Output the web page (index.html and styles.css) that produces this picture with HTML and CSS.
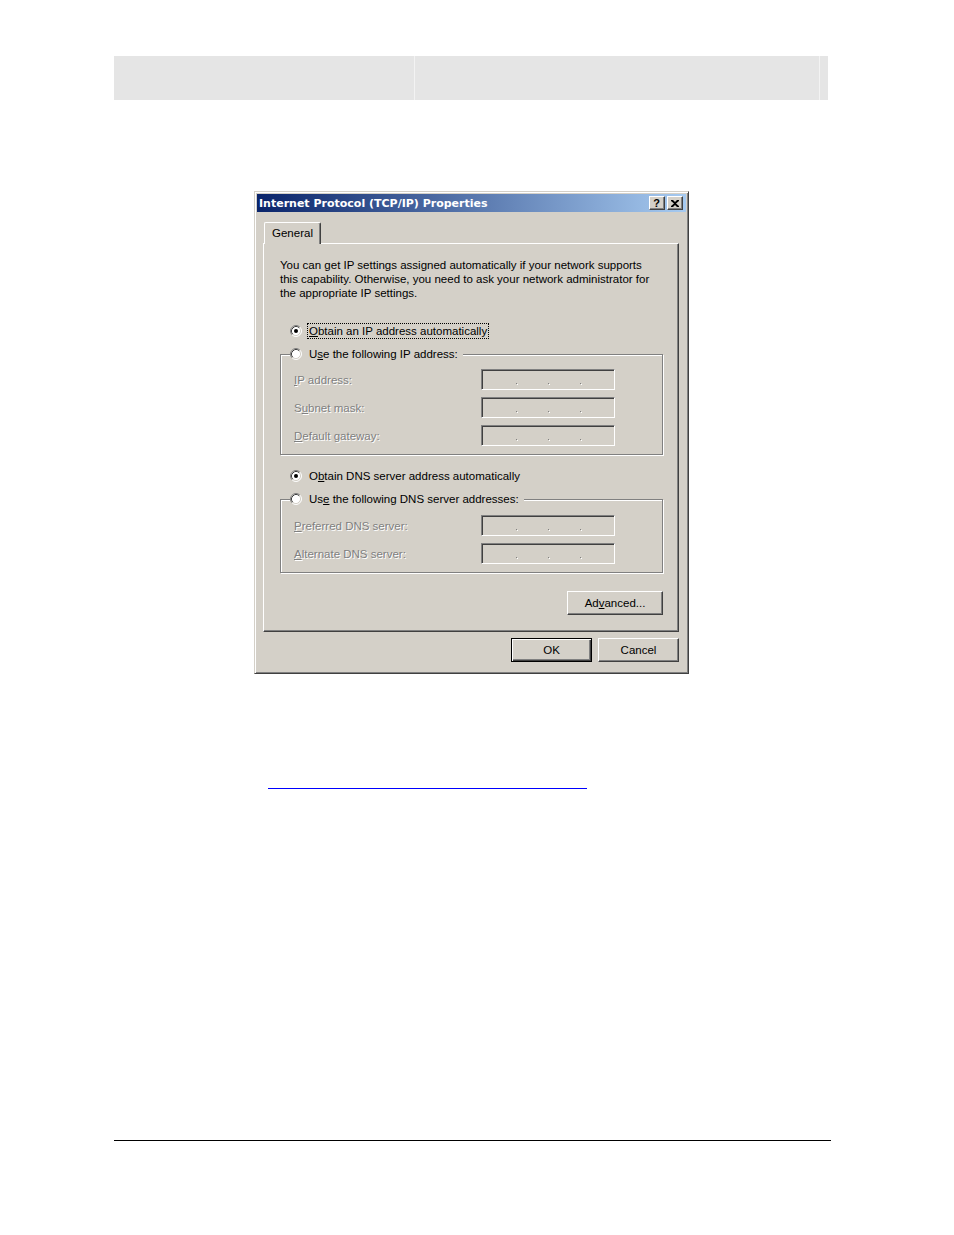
FILE: index.html
```html
<!DOCTYPE html>
<html lang="en">
<head>
<meta charset="utf-8">
<title>Internet Protocol (TCP/IP) Properties</title>
<link rel="stylesheet" href="styles.css">
</head>
<body>
<div class="page">
  <div class="header">
    <div class="hcell hcell-a"></div>
    <div class="hcell hcell-b"></div>
    <div class="hcell hcell-c"></div>
  </div>

  <div class="dialog">
    <div class="titlebar">
      <span class="title">Internet Protocol (TCP/IP) Properties</span>
      <span class="tbtns">
        <span class="tbtn tbtn-help">?</span>
        <span class="tbtn tbtn-close"><svg width="8" height="7" viewBox="0 0 8 7"><path d="M0 0h2l2 2 2-2h2v1L5 3.5 8 6v1H6L4 5 2 7H0V6l3-2.5L0 1z" fill="#000"/></svg></span>
      </span>
    </div>

    <div class="tabs">
      <div class="tab">General</div>
    </div>

    <div class="panel">
      <p class="desc">You can get IP settings assigned automatically if your network supports<br>this capability. Otherwise, you need to ask your network administrator for<br>the appropriate IP settings.</p>

      <div class="radio-row row-first">
        <svg class="radio" width="12" height="12" viewBox="0 0 12 12"><circle cx="6" cy="6" r="5" fill="#fff"/><path d="M2.11 9.89A5.5 5.5 0 0 1 9.89 2.11" fill="none" stroke="#808080"/><path d="M9.89 2.11A5.5 5.5 0 0 1 2.11 9.89" fill="none" stroke="#fff"/><path d="M2.82 9.18A4.5 4.5 0 0 1 9.18 2.82" fill="none" stroke="#404040"/><path d="M9.18 2.82A4.5 4.5 0 0 1 2.82 9.18" fill="none" stroke="#d4d0c8"/><circle cx="6" cy="6" r="2" fill="#000"/></svg>
        <span class="rlabel focus"><u>O</u>btain an IP address automatically</span>
      </div>

      <div class="group group-ip">
        <div class="legend">
          <svg class="radio" width="12" height="12" viewBox="0 0 12 12"><circle cx="6" cy="6" r="5" fill="#fff"/><path d="M2.11 9.89A5.5 5.5 0 0 1 9.89 2.11" fill="none" stroke="#808080"/><path d="M9.89 2.11A5.5 5.5 0 0 1 2.11 9.89" fill="none" stroke="#fff"/><path d="M2.82 9.18A4.5 4.5 0 0 1 9.18 2.82" fill="none" stroke="#404040"/><path d="M9.18 2.82A4.5 4.5 0 0 1 2.82 9.18" fill="none" stroke="#d4d0c8"/></svg>
          <span class="rlabel">U<u>s</u>e the following IP address:</span>
        </div>
        <div class="frow"><span class="flabel"><u>I</u>P address:</span><span class="ipfield"><i class="dot"></i><i class="dot"></i><i class="dot"></i></span></div>
        <div class="frow"><span class="flabel">S<u>u</u>bnet mask:</span><span class="ipfield"><i class="dot"></i><i class="dot"></i><i class="dot"></i></span></div>
        <div class="frow"><span class="flabel"><u>D</u>efault gateway:</span><span class="ipfield"><i class="dot"></i><i class="dot"></i><i class="dot"></i></span></div>
      </div>

      <div class="radio-row row-dns">
        <svg class="radio" width="12" height="12" viewBox="0 0 12 12"><circle cx="6" cy="6" r="5" fill="#fff"/><path d="M2.11 9.89A5.5 5.5 0 0 1 9.89 2.11" fill="none" stroke="#808080"/><path d="M9.89 2.11A5.5 5.5 0 0 1 2.11 9.89" fill="none" stroke="#fff"/><path d="M2.82 9.18A4.5 4.5 0 0 1 9.18 2.82" fill="none" stroke="#404040"/><path d="M9.18 2.82A4.5 4.5 0 0 1 2.82 9.18" fill="none" stroke="#d4d0c8"/><circle cx="6" cy="6" r="2" fill="#000"/></svg>
        <span class="rlabel">O<u>b</u>tain DNS server address automatically</span>
      </div>

      <div class="group group-dns">
        <div class="legend">
          <svg class="radio" width="12" height="12" viewBox="0 0 12 12"><circle cx="6" cy="6" r="5" fill="#fff"/><path d="M2.11 9.89A5.5 5.5 0 0 1 9.89 2.11" fill="none" stroke="#808080"/><path d="M9.89 2.11A5.5 5.5 0 0 1 2.11 9.89" fill="none" stroke="#fff"/><path d="M2.82 9.18A4.5 4.5 0 0 1 9.18 2.82" fill="none" stroke="#404040"/><path d="M9.18 2.82A4.5 4.5 0 0 1 2.82 9.18" fill="none" stroke="#d4d0c8"/></svg>
          <span class="rlabel">Us<u>e</u> the following DNS server addresses:</span>
        </div>
        <div class="frow"><span class="flabel"><u>P</u>referred DNS server:</span><span class="ipfield"><i class="dot"></i><i class="dot"></i><i class="dot"></i></span></div>
        <div class="frow"><span class="flabel"><u>A</u>lternate DNS server:</span><span class="ipfield"><i class="dot"></i><i class="dot"></i><i class="dot"></i></span></div>
      </div>

      <div class="adv-row">
        <span class="btn btn-adv">Ad<u>v</u>anced...</span>
      </div>
    </div>

    <div class="btn-row">
      <span class="btn btn-ok">OK</span>
      <span class="btn btn-cancel">Cancel</span>
    </div>
  </div>

  <a class="link-line" href="#"></a>
  <div class="footer-rule"></div>
</div>
</body>
</html>
```
FILE: styles.css
```css
html, body {
  margin: 0;
  padding: 0;
  background: #fff;
}
body {
  font-family: "Liberation Sans", Arial, sans-serif;
  font-size: 11.5px;
  color: #000;
}
.page {
  padding-top: 56px;
  padding-bottom: 94px;
}

/* header band */
.header {
  display: flex;
  margin-left: 114px;
  width: 714px;
  height: 44px;
  background: #e5e5e5;
}
.hcell-a { width: 300px; }
.hcell-b { width: 404px; border-left: 1px solid #f3f3f3; }
.hcell-c { flex: 1; border-left: 1px solid #f3f3f3; }

/* dialog window */
.dialog {
  box-sizing: border-box;
  margin: 91px 0 0 254px;
  width: 435px;
  height: 483px;
  padding: 2px;
  background: #d4d0c8;
  border: 1px solid;
  border-color: #d4d0c8 #404040 #404040 #d4d0c8;
  box-shadow: inset 1px 1px 0 #fff, inset -1px -1px 0 #808080;
}
.titlebar {
  display: flex;
  align-items: center;
  justify-content: space-between;
  height: 18px;
  padding: 0 3px 0 2px;
  background: linear-gradient(to right, #0a246a, #a6caf0);
}
.title {
  color: #fff;
  font-family: "DejaVu Sans", Verdana, sans-serif;
  font-weight: bold;
  font-size: 11px;
  white-space: nowrap;
}
.tbtns {
  display: flex;
  gap: 2px;
}
.tbtn {
  box-sizing: border-box;
  display: flex;
  align-items: center;
  justify-content: center;
  width: 16px;
  height: 14px;
  background: #d4d0c8;
  border: 1px solid;
  border-color: #fff #404040 #404040 #fff;
  box-shadow: inset -1px -1px 0 #808080;
  font-weight: bold;
  font-size: 11px;
  line-height: 12px;
}
.tbtn-help { padding-right: 1px; }

/* tabs */
.tabs {
  display: flex;
  margin-top: 10px;
  padding-left: 7px;
}
.tab {
  position: relative;
  z-index: 1;
  box-sizing: border-box;
  width: 57px;
  height: 22px;
  margin-bottom: -1px;
  padding-top: 3px;
  text-align: center;
  background: #d4d0c8;
  border: 1px solid;
  border-bottom: 0;
  border-color: #fff #404040 #d4d0c8 #fff;
  border-radius: 2px 2px 0 0;
  box-shadow: inset -1px 0 0 #808080;
  line-height: 14px;
}
.panel {
  box-sizing: border-box;
  margin-left: 6px;
  width: 416px;
  height: 389px;
  padding: 14px 15px 0 16px;
  border: 1px solid;
  border-color: #fff #404040 #404040 #fff;
  box-shadow: inset -1px -1px 0 #808080;
}
.desc {
  margin: 0;
  line-height: 14px;
  white-space: nowrap;
}

/* radios */
.radio-row {
  display: flex;
  align-items: center;
  height: 16px;
  padding-left: 10px;
}
.row-first { margin-top: 23px; }
.row-dns { margin-top: 13px; }
.radio {
  flex: none;
  display: block;
}
.rlabel {
  margin-left: 5px;
  padding: 0 1px;
  line-height: 14px;
  border: 1px solid transparent;
  white-space: nowrap;
}
.rlabel.focus {
  border: 1px dotted #000;
}

/* group boxes */
.group {
  margin-top: 15px;
  border: 1px solid #808080;
  box-shadow: 1px 1px 0 #fff, inset 1px 1px 0 #fff;
  padding: 0 0 8px 13px;
}
.legend {
  display: flex;
  align-items: center;
  width: fit-content;
  height: 16px;
  margin: -9px 0 7px -4px;
  padding-right: 3px;
  background: #d4d0c8;
}
.group-dns .legend { margin-bottom: 8px; }
.frow {
  display: flex;
  align-items: center;
  height: 21px;
}
.frow + .frow { margin-top: 7px; }
.flabel {
  width: 187px;
  color: #808080;
  text-shadow: 1px 1px 0 #fff;
  white-space: nowrap;
}
.ipfield {
  box-sizing: border-box;
  display: flex;
  align-items: flex-end;
  gap: 31px;
  width: 134px;
  height: 21px;
  padding: 0 0 5px 34px;
  border: 1px solid;
  border-color: #808080 #fff #fff #808080;
  box-shadow: inset 1px 1px 0 #404040, inset -1px -1px 0 #d4d0c8;
}
.dot {
  display: block;
  width: 1px;
  height: 1px;
  background: #808080;
  box-shadow: 1px 1px 0 #fff;
}

/* buttons */
.btn {
  box-sizing: border-box;
  display: flex;
  align-items: center;
  justify-content: center;
  height: 24px;
  background: #d4d0c8;
  border: 1px solid;
  border-color: #fff #404040 #404040 #fff;
  box-shadow: inset -1px -1px 0 #808080;
}
.adv-row {
  display: flex;
  justify-content: flex-end;
  margin-top: 18px;
}
.btn-adv { width: 96px; }
.btn-row {
  display: flex;
  justify-content: flex-end;
  gap: 6px;
  margin-top: 6px;
  padding-right: 7px;
}
.btn-ok {
  width: 81px;
  border: 1px solid #000;
  box-shadow: inset 1px 1px 0 #fff, inset -1px -1px 0 #404040, inset -2px -2px 0 #808080;
}
.btn-cancel { width: 81px; }

/* below the dialog */
.link-line {
  display: block;
  margin: 114px 0 0 268px;
  width: 319px;
  height: 0;
  border-top: 1px solid #0000ff;
}
.footer-rule {
  margin: 351px 0 0 114px;
  width: 717px;
  border-top: 1px solid #000;
}
```
